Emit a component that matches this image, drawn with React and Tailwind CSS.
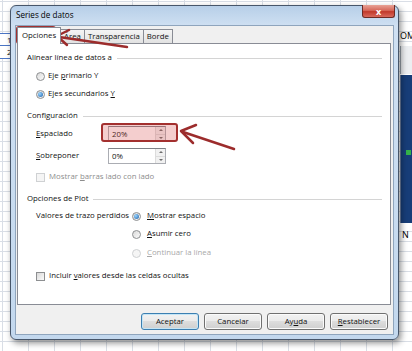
import React from "react";

const U = ({ children }) => (
  <span className="underline decoration-[0.5px] underline-offset-[1px]">{children}</span>
);

const Radio = ({ checked, disabled }) => (
  <span
    className={`flex h-[9px] w-[9px] shrink-0 items-center justify-center rounded-full border ${
      disabled
        ? "border-[#cfd1d3] bg-[#f5f5f5]"
        : "border-[#8d8f91] bg-[linear-gradient(135deg,#d9d9d9,#fbfbfb)]"
    }`}
  >
    {checked && (
      <span className="h-[5px] w-[5px] rounded-full bg-[radial-gradient(circle_at_35%_35%,#9ad6ff,#1a5ea9)]" />
    )}
  </span>
);

const Check = ({ disabled }) => (
  <span
    className={`h-[9px] w-[9px] shrink-0 border ${
      disabled
        ? "border-[#cfd1d3] bg-[#f5f5f5]"
        : "border-[#8d8f91] bg-[linear-gradient(135deg,#d9d9d9,#fbfbfb)]"
    }`}
  />
);

const Group = ({ children }) => (
  <div className="flex h-[14px] items-center pr-[8px]">
    <span className="whitespace-nowrap">{children}</span>
    <span className="ml-[5px] h-px flex-1 bg-[#d4d4d4]" />
  </div>
);

const Spin = ({ value }) => (
  <div className="flex h-[16px] w-[58px] border border-[#abadb3] border-t-[#7f8288] bg-white">
    <span className="flex-1 pl-[3px] leading-[14px]">{value}</span>
    <div className="flex w-[10px] flex-col border-l border-[#dcdcdc]">
      <span className="flex flex-1 items-center justify-center border-b border-[#dcdcdc] bg-[#f1f1f1]">
        <span className="border-x-[2px] border-b-[2px] border-x-transparent border-b-[#6d6d6d]" />
      </span>
      <span className="flex flex-1 items-center justify-center bg-[#f1f1f1]">
        <span className="border-x-[2px] border-t-[2px] border-x-transparent border-t-[#6d6d6d]" />
      </span>
    </div>
  </div>
);

const Btn = ({ children, primary }) => (
  <div
    className={`flex h-[17px] w-[58px] items-center justify-center rounded-[3px] border bg-[linear-gradient(#f2f2f2_0%,#ebebeb_45%,#dddddd_50%,#cfcfcf_100%)] ${
      primary
        ? "border-[#3c7fb1] shadow-[inset_0_0_0_1px_#c4e5f6]"
        : "border-[#707070] shadow-[inset_0_0_0_1px_#fbfbfb]"
    }`}
  >
    {children}
  </div>
);

const Tab = ({ children, active }) =>
  active ? (
    <div className="relative z-10 -mb-px flex h-[17px] items-center border border-b-0 border-[#898c95] bg-white px-[4px]">
      {children}
    </div>
  ) : (
    <div className="-ml-px flex h-[14px] items-center border border-b-0 border-[#898c95] bg-[linear-gradient(#f4f4f4,#e2e2e2)] px-[3px]">
      {children}
    </div>
  );

export default function App() {
  return (
    <div className="relative h-[351px] w-[412px] overflow-hidden whitespace-nowrap bg-white bg-[linear-gradient(90deg,#d9dee6_1px,transparent_1px),linear-gradient(#d9dee6_1px,transparent_1px)] bg-[length:26px_10px] bg-[position:2px_1px] font-['Open_Sans',sans-serif] text-[7.8px] text-[#111]">
      {/* spreadsheet rows on the left */}
      <div className="absolute left-0 top-[33px] flex w-[10px] flex-col border-y border-[#4a74c4] bg-white">
        <span className="flex h-[12px] items-center border-b border-[#4a74c4] pl-[7px] text-[8px]">1</span>
        <span className="flex h-[12px] items-center pl-[7px] text-[8px]">2</span>
      </div>

      {/* chart on the right */}
      <div className="absolute left-[400px] top-[30px] text-[9px] leading-[12px] text-black">OM</div>
      <div className="absolute left-[400px] top-[46px] h-[28px] w-[12px] border-l border-[#9aa3ad] bg-[#eceef1]" />
      <div className="absolute left-[400px] top-[75px] h-[148px] w-[12px] overflow-hidden border-l border-[#6c7fa0] bg-[#173d78]">
        <span className="absolute left-[5px] top-[75px] h-[5px] w-[5px] bg-[#34b24a]" />
      </div>
      <div className="absolute left-[402px] top-[229px] text-[9px] leading-[12px] text-black">N</div>

      {/* dialog window */}
      <div className="absolute left-[10px] top-[5px] flex h-[335px] w-[389px] flex-col rounded-[6px] border border-[#47566a] bg-[linear-gradient(#b7cfe8_0px,#cfe0f2_20px,#c3d8ee_100%)] shadow-[2px_3px_6px_rgba(0,0,0,0.45)]">
        {/* title bar */}
        <div className="relative flex h-[19px] items-center pl-[5px] text-[8.1px] text-black">
          Series de datos
          <div className="absolute right-[3px] top-[-1px] flex h-[13px] w-[33px] items-center justify-center rounded-b-[3px] border border-t-0 border-[#6d2a24] bg-[linear-gradient(#e8a295_0%,#d6685a_45%,#c1392b_55%,#d9695c_100%)] text-[9px] font-bold leading-none text-white">
            x
          </div>
        </div>

        {/* client area */}
        <div className="mx-[4px] mb-[4px] flex flex-1 flex-col border border-[#8fa5bd] bg-[#f0f0f0] pl-[1px] pr-[2px] pt-[1px]">
          <div className="flex items-end">
            <Tab active>Opciones</Tab>
            <Tab>Área</Tab>
            <Tab>Transparencia</Tab>
            <Tab>Borde</Tab>
          </div>

          <div className="flex h-[262px] flex-col border border-[#898c95] bg-white pl-[9px] pt-[7px]">
            <Group>Alinear línea de datos a</Group>
            <div className="mt-[4px] flex h-[14px] items-center gap-[3px] pl-[9px]">
              <Radio />
              <span>
                Eje <U>p</U>rimario Y
              </span>
            </div>
            <div className="mt-[4px] flex h-[14px] items-center gap-[3px] pl-[9px]">
              <Radio checked />
              <span>
                Ejes secundarios <U>Y</U>
              </span>
            </div>

            <div className="mt-[8px]">
              <Group>Configuración</Group>
            </div>
            <div className="mt-[3px] flex h-[16px] items-center pl-[9px]">
              <span className="w-[72px] shrink-0">
                <U>E</U>spaciado
              </span>
              <Spin value="20%" />
            </div>
            <div className="mt-[6px] flex h-[16px] items-center pl-[9px]">
              <span className="w-[72px] shrink-0">
                <U>S</U>obreponer
              </span>
              <Spin value="0%" />
            </div>
            <div className="mt-[6px] flex h-[14px] items-center gap-[4px] pl-[9px] text-[#8d8d8d]">
              <Check disabled />
              <span>
                Mostrar <U>b</U>arras lado con lado
              </span>
            </div>

            <div className="mt-[8px]">
              <Group>Opciones de Plot</Group>
            </div>
            <div className="mt-[3px] flex h-[14px] items-center pl-[9px]">
              <span className="w-[96px] shrink-0">Valores de trazo perdidos</span>
              <Radio checked />
              <span className="ml-[6px]">
                <U>M</U>ostrar espacio
              </span>
            </div>
            <div className="mt-[4px] flex h-[14px] items-center pl-[105px]">
              <Radio />
              <span className="ml-[6px]">
                <U>A</U>sumir cero
              </span>
            </div>
            <div className="mt-[5px] flex h-[14px] items-center pl-[105px] text-[#a8a8a8]">
              <Radio disabled />
              <span className="ml-[6px]">
                <U>C</U>ontinuar la línea
              </span>
            </div>
            <div className="mt-[9px] flex h-[14px] items-center gap-[4px] pl-[9px]">
              <Check />
              <span>
                Incluir <U>v</U>alores desde las celdas ocultas
              </span>
            </div>
          </div>

          <div className="mt-[8px] flex justify-end gap-[5px] pr-[3px]">
            <Btn primary>Aceptar</Btn>
            <Btn>Cancelar</Btn>
            <Btn>
              Ay<U>u</U>da
            </Btn>
            <Btn>
              <U>R</U>establecer
            </Btn>
          </div>
        </div>
      </div>

      {/* annotation boxes */}
      <div className="absolute left-[16px] top-[26px] h-[18px] w-[40px] rounded-[3px] border-2 border-[#a3302f] bg-[rgba(214,80,80,0.28)]" />
      <div className="absolute left-[101px] top-[123px] h-[19px] w-[77px] rounded-[3px] border-2 border-[#a3302f] bg-[rgba(214,80,80,0.28)]" />

      {/* annotation arrows */}
      <svg className="pointer-events-none absolute left-0 top-0" width="412" height="351" viewBox="0 0 412 351">
        <g fill="none" stroke="#9c2c2c" strokeWidth="2.5" strokeLinecap="round" strokeLinejoin="round">
          <line x1="127" y1="47" x2="59" y2="37" />
          <polyline points="69,30 57,36 67,45" />
          <line x1="234" y1="149" x2="183" y2="132" />
          <polyline points="196,125 181,131 193,143" />
        </g>
      </svg>
    </div>
  );
}
